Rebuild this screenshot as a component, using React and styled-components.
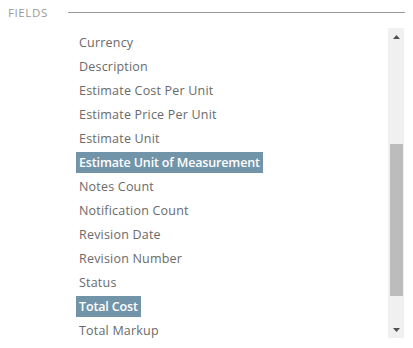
import React from "react";
import styled, { createGlobalStyle } from "styled-components";

const Global = createGlobalStyle`
  html, body { margin: 0; padding: 0; background: #fff; }
  body { font-family: "Open Sans", "Liberation Sans", sans-serif; }
`;

const Panel = styled.div`
  width: 413px;
  height: 348px;
  display: flex;
  flex-direction: column;
  overflow: hidden;
`;

const Header = styled.div`
  display: flex;
  align-items: center;
  gap: 20px;
  padding: 3px 8px 0 8px;
  height: 18px;
`;

const HeaderLabel = styled.span`
  font-size: 11.5px;
  letter-spacing: 0.6px;
  color: #9a9a9a;
  text-transform: uppercase;
`;

const HeaderRule = styled.div`
  flex: 1;
  height: 1px;
  background: #9a9a9a;
`;

const Body = styled.div`
  display: flex;
  margin-top: 7px;
  height: 310px;
  padding-right: 9px;
`;

const List = styled.ul`
  flex: 1;
  list-style: none;
  margin: 0;
  padding: 2px 0 0 76px;
  overflow: hidden;
`;

const Item = styled.li`
  height: 24px;
  display: flex;
  align-items: center;
`;

const Label = styled.span`
  display: inline-block;
  font-size: 12.5px;
  line-height: 21px;
  padding: 0 3px;
  color: ${(p) => (p.$selected ? "#ffffff" : "#6a6a6a")};
  background: ${(p) => (p.$selected ? "#7294a9" : "transparent")};
  font-weight: ${(p) => (p.$selected ? 600 : 400)};
  letter-spacing: ${(p) => (p.$selected ? "-0.15px" : "0.2px")};
`;

const Scrollbar = styled.div`
  width: 16px;
  background: #f0f0f0;
  display: flex;
  flex-direction: column;
  align-items: center;
`;

const Arrow = styled.div`
  height: 17px;
  width: 100%;
  display: flex;
  align-items: center;
  justify-content: center;
`;

const Track = styled.div`
  flex: 1;
  width: 100%;
  display: flex;
  flex-direction: column;
  padding: 0 1px 0 2px;
  box-sizing: border-box;
`;

const Thumb = styled.div`
  background: #bcbcbc;
  width: 100%;
`;

const Spacer = styled.div`
  flex: ${(p) => p.$grow};
`;

const fields = [
  "Currency",
  "Description",
  "Estimate Cost Per Unit",
  "Estimate Price Per Unit",
  "Estimate Unit",
  "Estimate Unit of Measurement",
  "Notes Count",
  "Notification Count",
  "Revision Date",
  "Revision Number",
  "Status",
  "Total Cost",
  "Total Markup",
];

const selected = new Set(["Estimate Unit of Measurement", "Total Cost"]);

export default function App() {
  return (
    <>
      <Global />
      <Panel>
        <Header>
          <HeaderLabel>Fields</HeaderLabel>
          <HeaderRule />
        </Header>
        <Body>
          <List>
            {fields.map((f) => (
              <Item key={f}>
                <Label $selected={selected.has(f)}>{f}</Label>
              </Item>
            ))}
          </List>
          <Scrollbar>
            <Arrow>
              <svg width="7" height="4" viewBox="0 0 7 4">
                <polygon points="3.5,0 7,4 0,4" fill="#505050" />
              </svg>
            </Arrow>
            <Track>
              <Spacer $grow={99} />
              <Thumb style={{ height: 152 }} />
              <Spacer $grow={25} />
            </Track>
            <Arrow>
              <svg width="7" height="4" viewBox="0 0 7 4">
                <polygon points="0,0 7,0 3.5,4" fill="#505050" />
              </svg>
            </Arrow>
          </Scrollbar>
        </Body>
      </Panel>
    </>
  );
}
